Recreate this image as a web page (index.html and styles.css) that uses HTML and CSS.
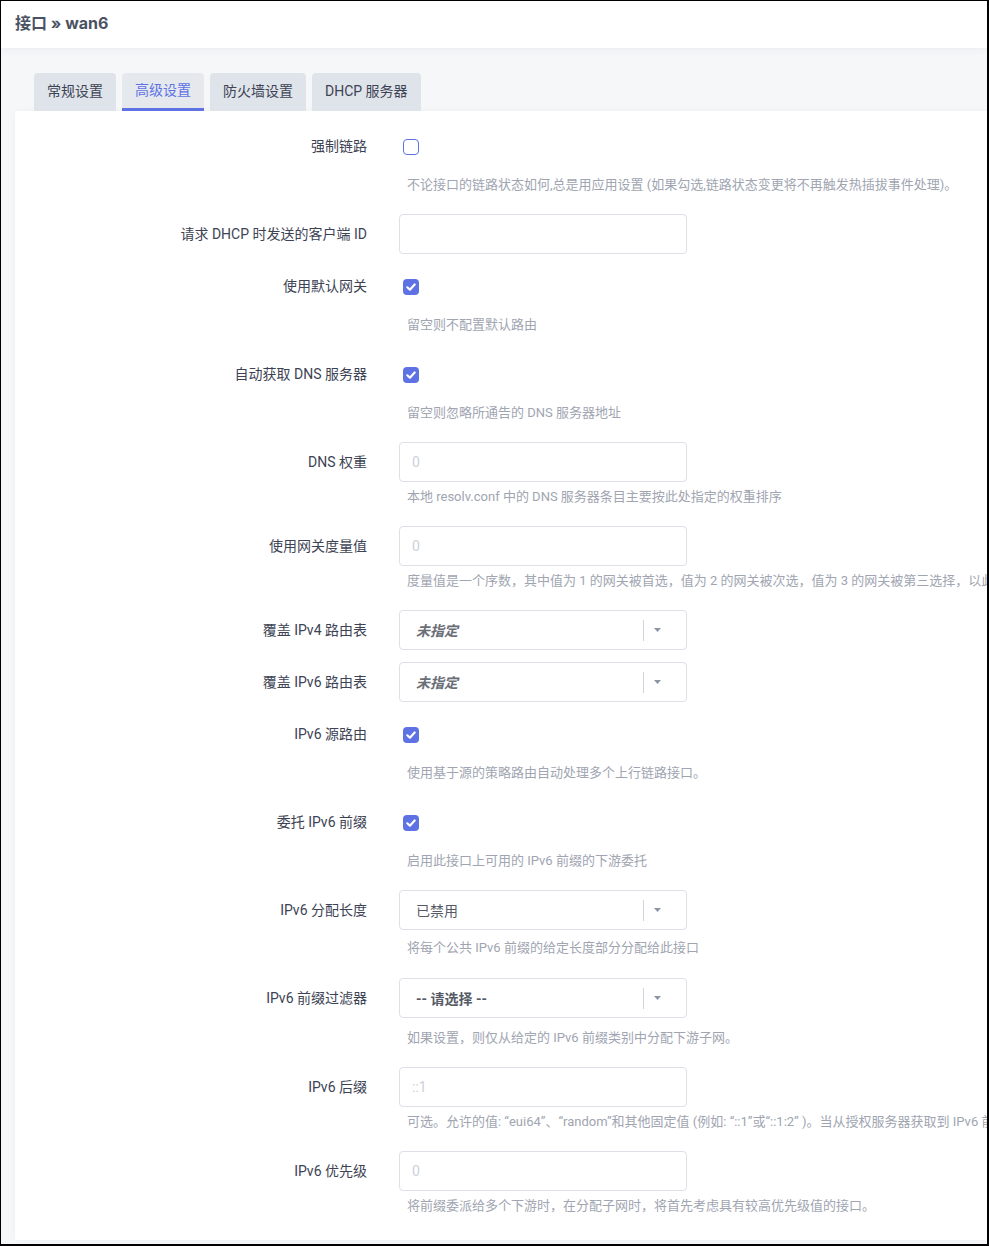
FILE: index.html
```html
<!DOCTYPE html>
<html lang="zh-CN">
<head>
<meta charset="utf-8">
<title>接口 » wan6</title>
<link rel="stylesheet" href="styles.css">
</head>
<body>
<div class="frame">
  <header class="topbar">
    <h2 class="title">接口 » wan6</h2>
  </header>
  <main class="content">
    <ul class="tabs">
      <li class="tab">常规设置</li>
      <li class="tab tab-active">高级设置</li>
      <li class="tab">防火墙设置</li>
      <li class="tab">DHCP 服务器</li>
    </ul>
    <section class="card">
      <div class="row">
        <label class="lbl">强制链路</label>
        <div class="field">
          <div class="check-line"><span class="cb"></span></div>
          <div class="desc desc-check">不论接口的链路状态如何,总是用应用设置 (如果勾选,链路状态变更将不再触发热插拔事件处理)。</div>
        </div>
      </div>
      <div class="row">
        <label class="lbl">请求 DHCP 时发送的客户端 ID</label>
        <div class="field"><input class="inp" type="text"></div>
      </div>
      <div class="row">
        <label class="lbl">使用默认网关</label>
        <div class="field">
          <div class="check-line"><span class="cb cb-on"><svg viewBox="0 0 16 16" width="16" height="16"><path d="M4.3 8.3 L6.9 10.7 L11.7 5.5" fill="none" stroke="#fff" stroke-width="2.2" stroke-linecap="round" stroke-linejoin="round"/></svg></span></div>
          <div class="desc desc-check">留空则不配置默认路由</div>
        </div>
      </div>
      <div class="row">
        <label class="lbl">自动获取 DNS 服务器</label>
        <div class="field">
          <div class="check-line"><span class="cb cb-on"><svg viewBox="0 0 16 16" width="16" height="16"><path d="M4.3 8.3 L6.9 10.7 L11.7 5.5" fill="none" stroke="#fff" stroke-width="2.2" stroke-linecap="round" stroke-linejoin="round"/></svg></span></div>
          <div class="desc desc-check">留空则忽略所通告的 DNS 服务器地址</div>
        </div>
      </div>
      <div class="row">
        <label class="lbl">DNS 权重</label>
        <div class="field">
          <input class="inp" type="text" placeholder="0">
          <div class="desc desc-input">本地 resolv.conf 中的 DNS 服务器条目主要按此处指定的权重排序</div>
        </div>
      </div>
      <div class="row">
        <label class="lbl">使用网关度量值</label>
        <div class="field">
          <input class="inp" type="text" placeholder="0">
          <div class="desc desc-input">度量值是一个序数，其中值为 1 的网关被首选，值为 2 的网关被次选，值为 3 的网关被第三选择，以此类推</div>
        </div>
      </div>
      <div class="row">
        <label class="lbl">覆盖 IPv4 路由表</label>
        <div class="field">
          <div class="sel"><span class="sel-val sel-unset">未指定</span><span class="sel-sep"></span><svg class="sel-arrow" viewBox="0 0 7 4" width="7" height="4"><path d="M0 0 H7 L3.5 4 Z" fill="#8c95a6"/></svg></div>
        </div>
      </div>
      <div class="row">
        <label class="lbl">覆盖 IPv6 路由表</label>
        <div class="field">
          <div class="sel"><span class="sel-val sel-unset">未指定</span><span class="sel-sep"></span><svg class="sel-arrow" viewBox="0 0 7 4" width="7" height="4"><path d="M0 0 H7 L3.5 4 Z" fill="#8c95a6"/></svg></div>
        </div>
      </div>
      <div class="row">
        <label class="lbl">IPv6 源路由</label>
        <div class="field">
          <div class="check-line"><span class="cb cb-on"><svg viewBox="0 0 16 16" width="16" height="16"><path d="M4.3 8.3 L6.9 10.7 L11.7 5.5" fill="none" stroke="#fff" stroke-width="2.2" stroke-linecap="round" stroke-linejoin="round"/></svg></span></div>
          <div class="desc desc-check">使用基于源的策略路由自动处理多个上行链路接口。</div>
        </div>
      </div>
      <div class="row">
        <label class="lbl">委托 IPv6 前缀</label>
        <div class="field">
          <div class="check-line"><span class="cb cb-on"><svg viewBox="0 0 16 16" width="16" height="16"><path d="M4.3 8.3 L6.9 10.7 L11.7 5.5" fill="none" stroke="#fff" stroke-width="2.2" stroke-linecap="round" stroke-linejoin="round"/></svg></span></div>
          <div class="desc desc-check">启用此接口上可用的 IPv6 前缀的下游委托</div>
        </div>
      </div>
      <div class="row">
        <label class="lbl">IPv6 分配长度</label>
        <div class="field">
          <div class="sel"><span class="sel-val">已禁用</span><span class="sel-sep"></span><svg class="sel-arrow" viewBox="0 0 7 4" width="7" height="4"><path d="M0 0 H7 L3.5 4 Z" fill="#8c95a6"/></svg></div>
          <div class="desc desc-select">将每个公共 IPv6 前缀的给定长度部分分配给此接口</div>
        </div>
      </div>
      <div class="row">
        <label class="lbl">IPv6 前缀过滤器</label>
        <div class="field">
          <div class="sel"><span class="sel-val sel-choose">-- 请选择 --</span><span class="sel-sep"></span><svg class="sel-arrow" viewBox="0 0 7 4" width="7" height="4"><path d="M0 0 H7 L3.5 4 Z" fill="#8c95a6"/></svg></div>
          <div class="desc desc-select desc-select-low">如果设置，则仅从给定的 IPv6 前缀类别中分配下游子网。</div>
        </div>
      </div>
      <div class="row">
        <label class="lbl">IPv6 后缀</label>
        <div class="field">
          <input class="inp" type="text" placeholder="::1">
          <div class="desc desc-input">可选。允许的值: “eui64”、“random”和其他固定值 (例如: “::1”或“::1:2” )。当从授权服务器获取到 IPv6 前缀（如 ‘a:b:c:d::’）时，使用后缀（如 ‘::1’）合成 IPv6 地址</div>
        </div>
      </div>
      <div class="row">
        <label class="lbl">IPv6 优先级</label>
        <div class="field">
          <input class="inp" type="text" placeholder="0">
          <div class="desc desc-input">将前缀委派给多个下游时，在分配子网时，将首先考虑具有较高优先级值的接口。</div>
        </div>
      </div>
    </section>
  </main>
</div>
</body>
</html>
```
FILE: styles.css
```css
* { box-sizing: border-box; }

html, body {
  margin: 0;
  padding: 0;
  background: #ffffff;
}

body {
  font-family: "Roboto", "Noto Sans CJK SC", "Noto Sans", sans-serif;
  color: #3d4354;
}

.frame {
  width: 989px;
  height: 1246px;
  border-style: solid;
  border-color: #000;
  border-width: 1px 2px 2px 1px;
  background: #f6f7f9;
  overflow: hidden;
}

.topbar {
  height: 47px;
  background: #ffffff;
  box-shadow: 0 2px 8px rgba(40, 50, 80, 0.05);
  position: relative;
  z-index: 1;
}

.title {
  margin: 0;
  padding-left: 14px;
  line-height: 45px;
  font-family: "Inter", "Noto Sans CJK SC", sans-serif;
  font-size: 16px;
  font-weight: 700;
  color: #4b5263;
}

.content {
  padding: 25px 0 0 14px;
}

.tabs {
  list-style: none;
  margin: 0 0 0 19px;
  padding: 0;
  display: flex;
  gap: 6px;
}

.tab {
  height: 38px;
  line-height: 37px;
  padding: 0 13px;
  font-size: 14px;
  color: #3d4354;
  background: #dfe4ea;
  border-radius: 4px 4px 0 0;
}

.tab-active {
  color: #5e72e4;
  background: #e5e9ee;
  border-bottom: 3px solid #5e72e4;
  line-height: 35px;
}

.card {
  background: #ffffff;
  padding: 15px 0 5px;
  box-shadow: 0 0 6px rgba(40, 50, 80, 0.04);
}

.row {
  display: grid;
  grid-template-columns: 352px auto;
  column-gap: 32px;
  margin-bottom: 12px;
}

.lbl {
  text-align: right;
  font-size: 14px;
  line-height: 40px;
  color: #3d4354;
  white-space: nowrap;
}

.field {
  min-width: 0;
}

.check-line {
  height: 40px;
  display: flex;
  align-items: center;
  padding: 1px 0 0 4px;
}

.cb {
  width: 16px;
  height: 16px;
  border: 1px solid #5e72e4;
  border-radius: 4px;
  background: #ffffff;
  display: block;
}

.cb-on {
  border: none;
  background: #5e72e4;
}

.cb svg {
  display: block;
}

.inp {
  display: block;
  width: 288px;
  height: 40px;
  border: 1px solid #dde0e7;
  border-radius: 4px;
  padding: 0 12px;
  font-family: inherit;
  font-size: 14px;
  color: #3d4354;
  background: #ffffff;
  outline: none;
}

.inp::placeholder {
  color: #ccd1d9;
}

.sel {
  width: 288px;
  height: 40px;
  border: 1px solid #dde0e7;
  border-radius: 4px;
  background: #ffffff;
  display: flex;
  align-items: center;
  padding: 0 25px 0 16px;
}

.sel-val {
  flex: 1;
  font-size: 14px;
  color: #555a66;
  white-space: nowrap;
}

.sel-unset {
  font-style: italic;
  font-weight: 700;
  color: #6b6e76;
}

.sel-choose {
  font-weight: 700;
  color: #555a66;
}

.sel-sep {
  width: 1px;
  height: 21px;
  background: #d0d3d9;
  margin-right: 10px;
}

.sel-arrow {
  display: block;
}

.desc {
  font-size: 13px;
  line-height: 20px;
  color: #a0a5b1;
  padding-left: 8px;
  white-space: nowrap;
}

.desc-check {
  margin: 8.5px 0 7.5px;
}

.desc-input {
  margin: 5px 0 7px;
}

.desc-select {
  margin: 8px 0 8px;
}

.desc-select-low {
  margin: 10px 0 7px;
}
```
